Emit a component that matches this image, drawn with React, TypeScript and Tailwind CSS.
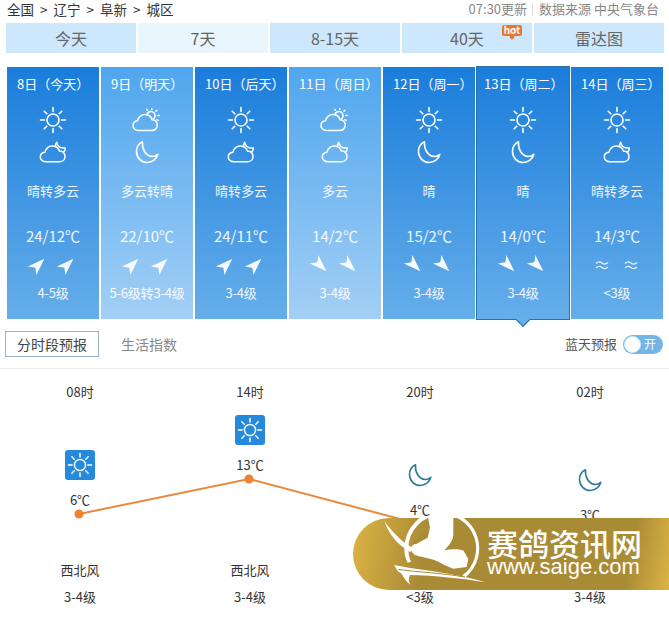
import React from "react";

const FONT = "[font-family:'Noto_Sans_CJK_SC','Noto_Sans',sans-serif]";

function Sun({ size = 28, color = "white" }: { size?: number; color?: string }) {
  return (
    <svg width={size} height={size} viewBox="0 0 28 28" fill="none" stroke={color} strokeWidth="1.6" strokeLinecap="round">
      <circle cx="14" cy="14" r="6" />
      <path d="M14 1.5v4M14 22.500v4M1.500 14h4M22.500 14h4M5.200 5.200l2.600 2.600M20.200 20.200l2.600 2.600M22.800 5.200l-2.600 2.600M7.800 20.200l-2.600 2.600" />
    </svg>
  );
}

function Moon({ size = 24, color = "white" }: { size?: number; color?: string }) {
  return (
    <svg width={size} height={size} viewBox="0 0 24 24" fill="none" stroke={color} strokeWidth="1.6" strokeLinejoin="round">
      <path d="M7.500 1.800C3.800 3.500 1.500 7.300 1.500 11.500 1.500 17.700 6.300 22.500 12.200 22.500 17.300 22.500 21.600 19.200 22.800 14.300 20.800 16 18.600 16.800 16.200 16.400 10.800 15.500 6.800 9 7.500 1.800Z" />
    </svg>
  );
}

function CloudMoon() {
  return (
    <svg width="28" height="24" viewBox="0 0 28 24" fill="none" stroke="white" strokeWidth="1.5" strokeLinejoin="round" strokeLinecap="round">
      <path d="M7 21.700C3.600 21.700 1.300 19.700 1.300 17 1.300 14.400 3.200 12.600 5.800 12.300 6.600 8.300 10 5.700 13.700 6 17 6.200 19.500 8.300 20.400 11.100 23.800 11 26 13.400 26 16.400 26 19.500 23.600 21.700 20.500 21.700Z" />
      <path d="M16.500 6.300C16.400 5 16.900 3.500 17.800 2.300 18 5 20.200 8.400 26.300 8 26.300 9.800 25.500 11.500 24.200 12.600" />
    </svg>
  );
}

function CloudSun() {
  return (
    <svg width="30" height="24" viewBox="0 0 30 24" fill="none" stroke="white" strokeWidth="1.5" strokeLinejoin="round" strokeLinecap="round">
      <path d="M6.500 22.500C3.200 22.500 1 20.300 1 17.600 1 15 3 13.100 5.500 12.800 6.300 8.800 9.700 6.300 13.400 6.600 16.700 6.800 19.200 8.900 20.100 11.700 23.300 11.600 25.300 14 25.300 17 25.300 20 23 22.500 20 22.500Z" />
      <path d="M15 6.500C15.500 4.500 17.500 3.200 19.500 3.500 21.800 3.900 23.300 6 23 8.300 22.800 9.500 22.200 10.500 21.200 11.200" />
      <path d="M19.800 .5v1M24.800 2.400l-.8.8M27.300 7.500h-1.500M26 12.400l-1.100-.7M14.800 1.300l.6 1" />
    </svg>
  );
}

function Arrow({ dir }: { dir: "ne" | "se" }) {
  return (
    <svg width="18" height="18" viewBox="0 0 24 24" style={{ transform: `rotate(${dir === "ne" ? 45 : 135}deg)` }}>
      <polygon points="12,0 20,23 12,17 4,23" fill="white" fillOpacity="0.93" />
    </svg>
  );
}

function Waves() {
  return (
    <svg width="14" height="12" viewBox="0 0 14 12" fill="none" stroke="white" strokeOpacity="0.9" strokeWidth="1.2">
      <path d="M1 4.500C3 2.500 5 2.500 7 4 9 5.500 11 5.500 13 3.500" />
      <path d="M1 9C3 7 5 7 7 8.500 9 10 11 10 13 8" />
    </svg>
  );
}

type Day = {
  date: string;
  am: "sun" | "cs";
  pm: "moon" | "cm";
  desc: string;
  temp: string;
  wind: "ne" | "se" | "wave";
  level: string;
  light?: boolean;
  active?: boolean;
};

const days: Day[] = [
  { date: "8日（今天）", am: "sun", pm: "cm", desc: "晴转多云", temp: "24/12℃", wind: "ne", level: "4-5级" },
  { date: "9日（明天）", am: "cs", pm: "moon", desc: "多云转晴", temp: "22/10℃", wind: "ne", level: "5-6级转3-4级", light: true },
  { date: "10日（后天）", am: "sun", pm: "cm", desc: "晴转多云", temp: "24/11℃", wind: "ne", level: "3-4级" },
  { date: "11日（周日）", am: "cs", pm: "cm", desc: "多云", temp: "14/2℃", wind: "se", level: "3-4级", light: true },
  { date: "12日（周一）", am: "sun", pm: "moon", desc: "晴", temp: "15/2℃", wind: "se", level: "3-4级" },
  { date: "13日（周二）", am: "sun", pm: "moon", desc: "晴", temp: "14/0℃", wind: "se", level: "3-4级", active: true },
  { date: "14日（周三）", am: "sun", pm: "cm", desc: "晴转多云", temp: "14/3℃", wind: "wave", level: "<3级" },
];

function DayCard({ d }: { d: Day }) {
  const bg = d.light
    ? "bg-[linear-gradient(180deg,#4fa6ee_0%,#a3cff5_100%)]"
    : "bg-[linear-gradient(180deg,#1a7ddb_0%,#66aeea_100%)]";
  const size = d.active
    ? "w-[94px] h-[254px] -mx-[1px] -mt-[1px] border border-[#2b74a8] pt-[7px]"
    : "w-[92px] h-[252px] pt-[7px]";
  return (
    <div className={`relative flex flex-col text-white ${bg} ${size}`}>
      <div className={`h-[20px] leading-[20px] text-[13px] whitespace-nowrap ${d.active ? "pl-[7px]" : "pl-[10px]"}`}>{d.date}</div>
      <div className="mt-[10px] h-[32px] flex items-center justify-center">
        {d.am === "sun" ? <Sun /> : <CloudSun />}
      </div>
      <div className="h-[32px] flex items-center justify-center">
        {d.pm === "moon" ? <Moon /> : <CloudMoon />}
      </div>
      <div className="mt-[13px] h-[20px] leading-[20px] text-[13px] text-center text-white/90">{d.desc}</div>
      <div className="mt-[24px] h-[22px] leading-[22px] text-[15px] text-center text-white/90">{d.temp}</div>
      <div className="mt-[8px] h-[20px] pr-[2px] flex items-center justify-center gap-[11px]">
        {d.wind === "wave" ? (
          <div className="flex gap-[15px]"><Waves /><Waves /></div>
        ) : (
          <>
            <Arrow dir={d.wind} />
            <Arrow dir={d.wind} />
          </>
        )}
      </div>
      <div className="mt-[8px] h-[20px] leading-[20px] text-[13px] text-center text-white/90 whitespace-nowrap tracking-[-0.2px]">{d.level}</div>
      {d.active && (
        <div className="absolute left-1/2 -bottom-[6px] -ml-[5px] w-[10px] h-[10px] rotate-45 bg-[#66aeea] border-r border-b border-[#2b74a8]" />
      )}
    </div>
  );
}

const tabs = ["今天", "7天", "8-15天", "40天", "雷达图"];

type Hour = { time: string; offset: string; icon: "sun" | "moon"; temp: string; wind: string; level: string };

const hours: Hour[] = [
  { time: "08时", offset: "mt-[35px]", icon: "sun", temp: "6℃", wind: "西北风", level: "3-4级" },
  { time: "14时", offset: "mt-0", icon: "sun", temp: "13℃", wind: "西北风", level: "3-4级" },
  { time: "20时", offset: "mt-[45px]", icon: "moon", temp: "4℃", wind: "", level: "<3级" },
  { time: "02时", offset: "mt-[50px]", icon: "moon", temp: "3℃", wind: "", level: "3-4级" },
];

const points = [
  [84, 145],
  [254, 110],
  [424, 155],
  [594, 160],
];

function Banner() {
  return (
    <div className="absolute left-[353px] top-[518px] w-[316px] h-[72px] rounded-l-[36px] overflow-visible bg-[linear-gradient(100deg,#dcb445_0%,#a98a35_24%,#a98a35_86%,#dcb445_100%)] flex">
      <svg className="absolute left-[32px] -top-[3px] overflow-visible" width="100" height="70" viewBox="0 0 300 210" fill="white">
        <defs>
          <clipPath id="logo-clip">
            <rect x="-10" y="9" width="330" height="220" />
          </clipPath>
        </defs>
        <g clipPath="url(#logo-clip)">
          <path d="M170 -12A112 112 0 0 1 240 188L232 181A100 100 0 0 0 170 0A100 100 0 0 0 70 100C70 115 72 128 78 140L68 143C60 128 58 114 58 100A112 112 0 0 1 170 -12Z" />
          <path d="M-2 18C20 50 50 80 82 98L76 112C40 90 12 60 -2 18Z" />
          <path d="M128 0H205V60C203 78 192 92 178 106 200 102 222 102 236 107L250 132 245 156 205 161C185 155 165 142 148 135 125 128 105 125 90 120 80 112 76 104 76 98 92 82 118 60 135 38Z" />
          <path d="M80 85L135 40 128 68 92 88Z" fill="#a98a35" />
          <path d="M27 150L80 160C150 170 230 180 302 202 230 190 150 182 75 180 70 190 70 198 76 209 65 200 57 190 50 176L40 170Z" />
          <path d="M40 163C100 172 170 174 240 186" fill="none" stroke="#a98a35" strokeWidth="3" />
        </g>
      </svg>
      <div className="ml-[134px] mt-[8px] flex flex-col text-white">
        <div className="h-[34px] leading-[34px] text-[31px] font-medium whitespace-nowrap">赛鸽资讯网</div>
        <div className="-mt-[4px] h-[22px] leading-[22px] text-[22px] whitespace-nowrap [font-family:'Liberation_Sans',sans-serif]">www.saige.com</div>
      </div>
    </div>
  );
}

export default function App() {
  return (
    <div className={`relative w-[669px] h-[619px] overflow-hidden bg-white ${FONT}`}>
      <div className="h-[23px] pl-[7px] pr-[10px] flex items-start justify-between">
        <div className="h-[18px] leading-[18px] text-[13.500px] text-[#333] flex gap-[6px]">
          <span>全国</span><span>&gt;</span><span>辽宁</span><span>&gt;</span><span>阜新</span><span>&gt;</span><span>城区</span>
        </div>
        <div className="h-[18px] leading-[18px] text-[13px] text-[#888] flex items-center">
          <span>07:30更新</span>
          <span className="ml-[5px] mr-[6px] w-px h-[13px] bg-[#ddd]" />
          <span>数据来源 中央气象台</span>
        </div>
      </div>

      <div className="pl-[6px] flex gap-[2px]">
        {tabs.map((t, i) => (
          <div
            key={t}
            className={`relative w-[130px] h-[30px] leading-[30px] text-center text-[16px] text-[#666] ${i === 1 ? "bg-[#eaf6fe]" : "bg-[#cde8fc]"}`}
          >
            {t}
            {t === "40天" && (
              <div className="absolute left-[100px] top-[2px] w-[20px] h-[11px] leading-[10px] rounded-[2px] bg-[#e8772e] text-white text-[10px] font-bold">
                hot
                <div className="absolute left-[8px] top-[10px] w-[4px] h-[4px] rotate-45 bg-[#e8772e]" />
              </div>
            )}
          </div>
        ))}
      </div>

      <div className="mt-[14px] pl-[7px] flex gap-[2px]">
        {days.map((d) => (
          <DayCard key={d.date} d={d} />
        ))}
      </div>

      <div className="mt-[11px] pl-[5px] pr-[6px] h-[26px] flex items-center">
        <div className="w-[94px] h-[26px] leading-[24px] text-center text-[14px] text-[#444] border border-[#9ab3c2]">分时段预报</div>
        <div className="ml-[22px] text-[14px] text-[#888]">生活指数</div>
        <div className="ml-auto flex items-center gap-[6px]">
          <span className="text-[13px] text-[#555]">蓝天预报</span>
          <div className="w-[40px] h-[19px] rounded-full bg-[#74b5e5] flex items-center pl-[1px]">
            <div className="w-[17px] h-[17px] rounded-full bg-white border border-[#d5e9f7]" />
            <span className="ml-[3px] text-[12px] leading-none text-white">开</span>
          </div>
        </div>
      </div>

      <div className="mt-[11px] h-px bg-[#eeeeee]" />

      <div className="-ml-[5px] w-[680px]">
        <div className="relative h-[190px] grid grid-cols-4">
          {hours.map((h) => (
            <div key={h.time} className="flex flex-col items-center text-[13px] text-[#333]">
              <div className="h-[46px] leading-[46px]">{h.time}</div>
              <div className={`w-[30px] h-[30px] flex items-center justify-center ${h.offset} ${h.icon === "sun" ? "bg-[#2589dc] rounded-[3px]" : ""}`}>
                {h.icon === "sun" ? <Sun size={26} /> : <Moon size={24} color="#2f7a99" />}
              </div>
              <div className="mt-[10px] h-[20px] leading-[20px]">{h.temp}</div>
            </div>
          ))}
          <svg className="absolute left-0 top-0" width="680" height="190" fill="none">
            <polyline points={points.map((p) => p.join(",")).join(" ")} stroke="#e58a3f" strokeWidth="2" />
            {points.map((p) => (
              <circle key={p[0]} cx={p[0]} cy={p[1]} r="4.500" fill="#ee8432" />
            ))}
          </svg>
        </div>
        <div className="grid grid-cols-4 text-[13px] text-[#333]">
          {hours.map((h) => (
            <div key={h.time} className="flex flex-col items-center">
              <div className="h-[22px] leading-[22px]">{h.wind}</div>
              <div className="mt-[5px] h-[22px] leading-[22px]">{h.level}</div>
            </div>
          ))}
        </div>
      </div>

      <Banner />
    </div>
  );
}
